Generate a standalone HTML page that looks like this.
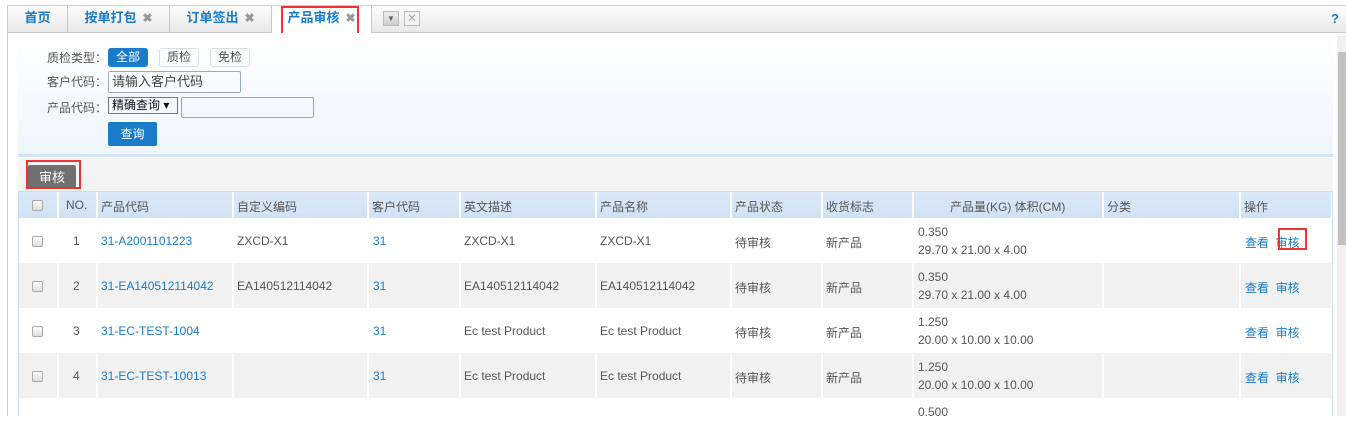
<!DOCTYPE html>
<html><head><meta charset="utf-8"><style>
*{margin:0;padding:0;box-sizing:border-box}
body{width:1346px;height:416px;overflow:hidden;background:#fff;font:12px "Liberation Sans","Noto Sans CJK SC",sans-serif;color:#555;position:relative}
.a{position:absolute}
.tabbar{left:7px;top:5px;width:1339px;height:28px;border-top:1px solid #ccc;border-bottom:1px solid #c8c8c8;background:linear-gradient(#fdfdfd,#e8e8e8)}
.tab{top:0;height:26px;line-height:24px;text-align:center;font-weight:bold;color:#1a7bc9;font-size:13px;border-right:1px solid #c8c8c8}
.x{color:#999;margin-left:6px;font-size:12px}
.lnk{color:#1a7bc9}
.cell{position:absolute;white-space:nowrap}
.cb{width:11px;height:11px;border:1px solid #aaa;border-radius:2px;background:linear-gradient(#fff,#ddd)}
</style></head><body>
<div class="a tabbar">
 <div class="a tab" style="left:0;width:61px;border-left:1px solid #c8c8c8">首页</div>
 <div class="a tab" style="left:61px;width:102px">按单打包<span class="x">✖</span></div>
 <div class="a tab" style="left:163px;width:102px">订单签出<span class="x">✖</span></div>
 <div class="a tab" style="left:265px;width:100px;height:28px;background:#fff">产品审核<span class="x">✖</span></div>
 <div class="a" style="left:376px;top:5px;width:16px;height:15px;border:1px solid #bbb;background:linear-gradient(#eee,#ccc);font-size:8px;text-align:center;line-height:13px;color:#666">▼</div>
 <div class="a" style="left:397px;top:5px;width:16px;height:15px;border:1px solid #bbb;background:#f4f4f4;color:#aaa;text-align:center;line-height:13px;font-size:12px">✕</div>
 <div class="a" style="left:1324px;top:5px;color:#1a7bc9;font-weight:bold;font-size:13px">?</div>
</div>
<div class="a" style="left:281px;top:6px;width:78px;height:29px;border:2px solid #e33"></div>
<div class="a" style="left:7px;top:33px;width:1px;height:383px;background:#ccc"></div>
<div class="a" style="left:18px;top:33px;width:1315px;height:121px;background:linear-gradient(#fff,#eef5fc)"></div>
<div class="a" style="left:18px;top:154px;width:1315px;height:3px;background:#d2e3f3"></div>
<div class="a" style="left:47px;top:49px">质检类型：</div>
<div class="a" style="left:108px;top:48px;width:40px;height:19px;background:#1a7bc9;color:#fff;border-radius:3px;text-align:center;line-height:19px">全部</div>
<div class="a" style="left:159px;top:48px;width:40px;height:19px;border:1px solid #ddd;border-radius:3px;text-align:center;line-height:17px">质检</div>
<div class="a" style="left:210px;top:48px;width:40px;height:19px;border:1px solid #ddd;border-radius:3px;text-align:center;line-height:17px">免检</div>
<div class="a" style="left:47px;top:73px">客户代码：</div>
<div class="a" style="left:108px;top:71px;width:133px;height:22px;border:1px solid #9ab;border-radius:2px;padding-left:3px;line-height:20px;color:#444;font-size:13px">请输入客户代码</div>
<div class="a" style="left:47px;top:99px">产品代码：</div>
<div class="a" style="left:108px;top:97px;width:70px;height:17px;border:1px solid #777;line-height:15px;padding-left:3px;color:#111">精确查询 ▾</div>
<div class="a" style="left:181px;top:97px;width:133px;height:21px;border:1px solid #9ab;border-radius:2px"></div>
<div class="a" style="left:108px;top:122px;width:49px;height:24px;background:#1a7bc9;color:#fff;border-radius:2px;text-align:center;line-height:24px">查询</div>
<div class="a" style="left:18px;top:158px;width:1315px;height:33px;background:#f4f4f4"></div>
<div class="a" style="left:28px;top:165px;width:48px;height:23px;background:#707070;color:#fff;border-radius:2px;text-align:center;line-height:26px;font-size:13px">审核</div>
<div class="a" style="left:26px;top:160px;width:55px;height:29px;border:2px solid #e33"></div>
<div class="a" style="left:18px;top:191px;width:1315px;height:225px;border:1px solid #c8def3;border-bottom:none"></div>
<div class="a" style="left:19px;top:192px;width:1312px;height:26px;background:linear-gradient(#dbe9f8,#cfe2f5)"></div>
<div id="t"></div>
<div class="a" style="left:1337px;top:36px;width:9px;height:380px;background:#f0f0f0"></div>
<div class="a" style="left:1338px;top:52px;width:8px;height:193px;background:#c1c1c1"></div>
<div class="a" style="left:1278px;top:228px;width:29px;height:22px;border:2px solid #e33"></div>
<script>
var xs=[19,58,97,233,368,460,596,731,822,913,1103,1240,1331];
var h='';
var heads=['','NO.','产品代码','自定义编码','客户代码','英文描述','产品名称','产品状态','收货标志','产品量(KG) 体积(CM)','分类','操作'];
var rows=[['1','31-A2001101223','ZXCD-X1','31','ZXCD-X1','ZXCD-X1','0.350','29.70 x 21.00 x 4.00'],
['2','31-EA140512114042','EA140512114042','31','EA140512114042','EA140512114042','0.350','29.70 x 21.00 x 4.00'],
['3','31-EC-TEST-1004','','31','Ec test Product','Ec test Product','1.250','20.00 x 10.00 x 10.00'],
['4','31-EC-TEST-10013','','31','Ec test Product','Ec test Product','1.250','20.00 x 10.00 x 10.00']];
for(var i=1;i<xs.length-1;i++)h+='<div class="a" style="left:'+(xs[i]-1)+'px;top:192px;width:2px;height:224px;background:#fff"></div>';
for(var i=0;i<heads.length;i++){
 if(i==0)h+='<div class="a cb" style="left:32px;top:200px"></div>';
 else if(i==1)h+='<div class="cell" style="left:66px;top:198px">NO.</div>';
 else if(i==9)h+='<div class="cell" style="left:950px;top:198px">'+heads[i]+'</div>';
 else h+='<div class="cell" style="left:'+(xs[i]+4)+'px;top:198px">'+heads[i]+'</div>';
}
var bg='';
for(var r=0;r<5;r++){var y=218+r*45;
 bg+='<div class="a" style="left:19px;top:'+y+'px;width:1312px;height:45px;background:'+(r%2?'#f1f1f1':'#fff')+'"></div>';}
for(var r=0;r<4;r++){var y=218+r*45,d=rows[r],ty=y+16;
 h+='<div class="a cb" style="left:32px;top:'+(y+18)+'px"></div>';
 h+='<div class="cell" style="left:73px;top:'+ty+'px">'+d[0]+'</div>';
 h+='<div class="cell lnk" style="left:101px;top:'+ty+'px">'+d[1]+'</div>';
 h+='<div class="cell" style="left:237px;top:'+ty+'px">'+d[2]+'</div>';
 h+='<div class="cell lnk" style="left:373px;top:'+ty+'px">'+d[3]+'</div>';
 h+='<div class="cell" style="left:464px;top:'+ty+'px">'+d[4]+'</div>';
 h+='<div class="cell" style="left:600px;top:'+ty+'px">'+d[5]+'</div>';
 h+='<div class="cell" style="left:735px;top:'+ty+'px">待审核</div>';
 h+='<div class="cell" style="left:826px;top:'+ty+'px">新产品</div>';
 h+='<div class="cell" style="left:918px;top:'+(y+7)+'px">'+d[6]+'</div>';
 h+='<div class="cell" style="left:918px;top:'+(y+25)+'px">'+d[7]+'</div>';
 h+='<div class="cell lnk" style="left:1245px;top:'+ty+'px">查看&nbsp;&nbsp;审核</div>';
}
h+='<div class="cell" style="left:918px;top:405px">0.500</div>';
document.getElementById('t').outerHTML=bg+h;
</script>
</body></html>
